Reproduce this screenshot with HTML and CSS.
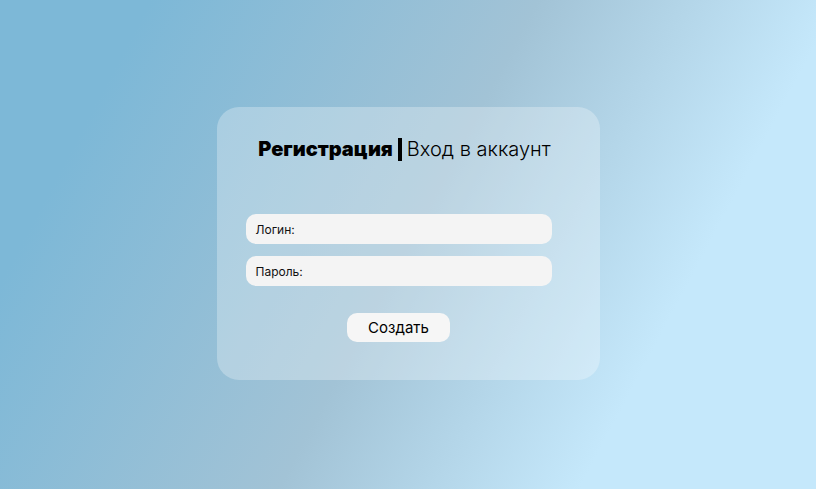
FILE: index.html
```html
<!DOCTYPE html>
<html lang="ru">
<head>
<meta charset="utf-8">
<link rel="stylesheet" href="styles.css">
</head>
<body>
<main class="page">
  <form class="card">
    <h1 class="title"><span class="title-active">Регистрация</span><span class="title-bar"></span><span class="title-alt">Вход в аккаунт</span></h1>
    <div class="fields">
      <label class="field"><span class="field-label">Логин:</span></label>
      <label class="field"><span class="field-label">Пароль:</span></label>
    </div>
    <button class="submit" type="button">Создать</button>
  </form>
</main>
</body>
</html>
```
FILE: styles.css
```css
html, body {
  margin: 0;
  padding: 0;
  height: 100%;
}
body {
  font-family: Inter, "Noto Sans", sans-serif;
  background: linear-gradient(118deg, #7db8d7 14%, #a2c3d6 50%, #c5e8fb 78%);
  overflow: hidden;
}
.page {
  height: 489px;
  box-sizing: border-box;
  padding-top: 107px;
  display: flex;
  align-items: flex-start;
  justify-content: center;
}
.card {
  width: 383px;
  height: 273px;
  box-sizing: border-box;
  border-radius: 22px;
  background: rgba(255, 255, 255, 0.28);
  padding: 30px 48px 0 29px;
  display: flex;
  flex-direction: column;
  align-items: center;
}
.title {
  margin: 0 0 0 12px;
  display: flex;
  align-items: center;
  white-space: nowrap;
  font-size: 20px;
  line-height: 24px;
  color: #000;
}
.title-active {
  font-weight: 900;
}
.title-bar {
  width: 4px;
  height: 23px;
  background: #000;
  margin: 0 5px 0 5px;
}
.title-alt {
  font-weight: 300;
}
.fields {
  margin-top: 53px;
  align-self: stretch;
  display: flex;
  flex-direction: column;
  gap: 12px;
}
.field {
  height: 30px;
  border-radius: 10px;
  background: #f4f4f4;
  display: flex;
  align-items: center;
  padding-left: 10px;
  font-size: 12px;
  color: #111;
}
.submit {
  margin-top: 27px;
  width: 103px;
  height: 29px;
  border: none;
  border-radius: 10px;
  background: #f6f6f6;
  font-family: Inter, "Noto Sans", sans-serif;
  font-size: 15px;
  color: #000;
  padding: 0;
}
```
